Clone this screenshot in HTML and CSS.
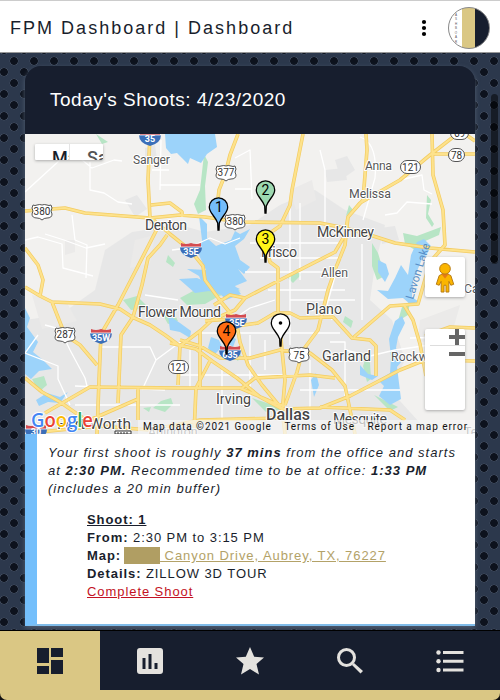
FILE: index.html
```html
<!DOCTYPE html>
<html lang="en">
<head>
<meta charset="utf-8">
<title>FPM Dashboard</title>
<link rel="stylesheet" href="styles.css">
</head>
<body>
<header class="topbar">
  <h1>FPM Dashboard | Dashboard</h1>
  <svg class="more" viewBox="0 0 6 18"><circle cx="3" cy="3" r="2.1"/><circle cx="3" cy="9" r="2.1"/><circle cx="3" cy="15" r="2.1"/></svg>
  <div class="avatar"><span>DASHBOARD</span></div>
</header>
<main class="content">
  <section class="card">
    <h2>Today's Shoots: 4/23/2020</h2>
    <div class="map">
      <svg class="map-art" viewBox="25 134 450 300">
        <defs>
          <path id="us" d="M-9-7Q-7-6-5-7Q-2-8 0-7Q2-8 5-7Q7-6 9-7L10-4Q8-1 10 2Q10 6 5 6Q2 6 0 8Q-2 6-5 6Q-10 6-10 2Q-8-1-10-4Z" fill="#fff" stroke="#555" stroke-width="1"/>
          <g id="inter"><path d="M-10-7Q-5-5 0-7Q5-5 10-7L10-3H-10Z" fill="#d34b50"/><path d="M-11-3H11Q11 5 0 8Q-11 5-11-3Z" fill="#3b6fb9"/><path d="M-11-3H11" stroke="#fff" stroke-width=".8"/></g>
          <path id="pin" d="M-9.200 0A9.200 9.200 0 0 1 9.200 0C9.200 6 4 8 .8 16L.5 23H-.5L-.8 16C-4 8-9.200 6-9.200 0Z" stroke="#000" stroke-width="1.300"/>
          <path id="roads" d="M150 134L148 180L150 218L156 231L135 272L118 305L101 334L99 380L97 434M150 217L170 234L190 250L203 266L205 280L222 303L236 320L240 342L248 365L262 385L282 409L285 434M25 211L65 208L85 213L150 218L180 215L205 217L240 222L320 223L345 228L370 235L395 243L430 248L475 252M238 134L230 155L225 175L219 190L216 217M151 205L170 203L182 212L182 217M167 235L160 245L148 258L142 285L133 317L121 335L118 403M25 248L38 265L43 280L40 296M25 287L40 296L52 302L100 304L120 309L132 317L150 325L165 335L180 346M52 302L65 335L80 345L97 365M303 134L292 190L290 205L280 226L270 233L267 250L270 262L278 268L278 310L282 350L285 380L282 414M457 134L430 155L400 180L360 203L348 217L345 235L335 252L280 280L245 298L235 310L212 320L200 331L180 346L178 385M366 134L367 150L363 200L348 217L345 245L335 270L328 290L318 330L303 350L297 372L285 405M432 134L433 175L443 210L445 245L430 262L418 304L390 306L354 337M432 154H475M465 134L475 141M205 321L230 319L237 326L258 323L275 313L290 313L300 318L333 317L352 338L370 340L376 346L376 376M200 331V388M180 340L200 346L220 358L250 358L280 350L310 353L332 370L345 386L350 410L355 434M170 343L196 349L212 361L237 378L260 397L282 409L320 408L350 396L400 370L425 360L475 361M25 378L42 392L60 402L83 418M45 413L90 387L180 388L240 388L272 402L285 406M83 423L138 399M138 387V420M40 432L100 426L150 430L200 420L282 418M210 361L196 388L194 434M320 407L390 410L405 420M404 305L413 320L420 344L426 376M214 305L230 295L245 298M242 388L255 378L310 375L335 378M425 336L450 327L475 328"/>
        </defs>
        <rect x="25" y="134" width="450" height="300" fill="#f2f1ef"/>
        <path class="urban" d="M25 320L60 315L95 290L105 250L132 232L180 225L205 232L250 225L280 205L315 190L345 210L385 225L375 265L370 300L392 320L405 360L390 390L430 434H25ZM125 200l12-5 10 14-12 8zM335 160l12-4 8 14-14 10zM145 148l10-3 2 15-12 3zM325 170l20-2 2 12-20 2zM380 228l15-2 4 14-17 4z"/>
        <path class="soft" d="M65 240h10v12l-10 3zM32 295l35 8 10 18-35 8zM135 240l20-5-5 28-20 5zM290 190l22-10 4 20-20 10zM420 320l40-15-10 35-32 2z"/>
        <g class="park">
          <path d="M204 154l4 8-3 24 1 24-8 4-4-10 6-14 2-18zM96 134l12 8-6 2zM168 255l7 8-2 4-7-5zM160 310l12-1 6 12-10 3zM180 298l15-8 32-4 14 5-22 5-14 8-18 1zM123 300l14-4 12 12-18 2zM32 379l12-3 3 9-8 7zM153 408l8-7 10-3 2 6-8 8zM372 243l6 10 7 23-8 4-5-14zM403 233l14 3 24-9-2 8-16 7-8 8-10-6zM427 195l4 5-3 14 6 10-2 3-6-9zM345 316l8 5-2 7-8-6zM366 357l4 6 1 16-4 3-4-16zM374 395l24 12-8 4zM288 278l9-9 4 6-8 8zM143 408l8-1-2 5zM235 350l6 5-3 6-6-5zM349 205l4 5-7 6zM402 307l8-6-2 14-10 6zM252 398l24 8 4 4-14 2z"/>
        </g>
        <g class="water">
          <path d="M165 134H215L217 147L207 154L201 163L190 158L188 164L177 153L171 154L166 148Z"/>
          <path d="M199 216L207 224L207 238L216 246L231 240L235 231L240 234L250 229L244 239L235 246L240 260L250 267L244 274L238 269L247 281L235 286L241 294L226 300L216 289L204 287L199 276L187 269L206 270L199 255L202 240Z"/>
          <path d="M179 279L197 278L216 286L229 284L240 289L225 296L209 291L195 293ZM168 315L180 323L191 331L190 338L180 332L170 330ZM211 337l8 3 3 7-8 8-6-7zM228 335l8 4-3 8-7-5z"/>
          <path d="M25 308L30 318L27 327L38 342L33 352L43 360L52 369L39 371L31 379L25 374ZM36 400l11-7 13 4 8-5-8 11-12-1-9 4z"/>
          <path d="M424 239L431 246L427 254L422 259L413 281L412 297L419 302L410 304L403 298L388 299L377 290L388 291L395 278L401 265L408 275L411 255L417 242ZM402 316L405 323L398 337L396 348L402 361L397 367L401 399L390 405L379 396L384 386L378 380L390 373L391 357L389 339L395 321ZM378 260l8 4 3 10-4 8-7-10zM311 380l5-7 3 12-5 12zM360 365l8 9 10 2-6 4-12-5z"/>
        </g>
        <g class="minor">
          <path d="M25 192L60 160L65 146L92 168L114 160L122 161M90 162L90 190L104 193L118 202L132 204M45 234L64 240L86 248L105 244M72 215L75 240L87 245L86 278M25 240L38 237L62 244L63 268L93 276M161 140L160 190M152 170H169M160 185H200M235 158L250 150L252 199M235 189H252M325 223V170L320 150M360 137Q378 143 375 178L363 220M385 215l12-2 10-11 25 2M400 180l22-5 2 15 8 4M344 244L327 305L332 320M362 244L362 320M290 205V345M300 203V280M250 243H340M260 258H342M245 272H340M268 290H345M290 300H355M200 333H340M330 342H345V400M45 325L60 329L70 350L85 378L88 390M38 335L25 353L58 366L58 379L70 405M100 347H150L156 360L142 390M156 360L183 340M145 295L178 300M75 405H180M190 350V388M222 370V420M250 335V405M265 340V370M310 360V420M180 375H285M300 390H400M345 350L370 356L395 350L430 345M410 338L460 337M75 386L165 390M225 325L250 308L275 300M172 250L188 248L210 238L225 244L240 238"/>
        </g>
        <use href="#roads" class="outer"/>
        <use href="#roads" class="inner"/>
        <g class="town">
          <text x="133" y="164" textLength="37">Sanger</text><text x="365" y="170" textLength="27">Anna</text><text x="349" y="198" textLength="42">Melissa</text><text x="321" y="277" textLength="27">Allen</text><text x="391" y="361" textLength="50">Rockwall</text><text x="464" y="293">Caddo</text><text x="148" y="436">Arlington</text><text x="464" y="436">Terrell</text>
        </g>
        <g class="city">
          <text x="145" y="230" textLength="42">Denton</text><text x="317" y="237" textLength="57">McKinney</text><text x="261" y="257" textLength="36">Frisco</text><text x="138" y="317" textLength="83">Flower Mound</text><text x="306" y="314" textLength="36">Plano</text><text x="322" y="361" textLength="49">Garland</text><text x="216" y="404" textLength="35">Irving</text><text x="333" y="424" textLength="54">Mesquite</text>
          <text class="big" x="57" y="429" textLength="74">Fort Worth</text><text class="dallas" x="266" y="420" textLength="44">Dallas</text>
        </g>
        <text class="lake" transform="translate(413 300) rotate(-73)">Lavon Lake</text>
        <g class="shield">
          <use href="#us" x="42" y="212"/><text x="42" y="215">380</text>
          <use href="#us" x="226" y="173"/><text x="226" y="176">377</text>
          <use href="#us" x="235" y="222"/><text x="235" y="225">380</text>
          <use href="#us" x="65" y="335"/><text x="65" y="338">287</text>
          <use href="#us" x="299" y="355"/><text x="299" y="359">75</text>
          <rect x="400.500" y="160.500" width="20" height="13" rx="6.500"/><text x="410.500" y="170.500">121</text>
          <rect x="448.500" y="148.500" width="16" height="13" rx="6.500"/><text x="456.500" y="158.500">78</text>
          <rect x="450.500" y="126.500" width="18" height="13" rx="6.500"/><text x="459.500" y="137">69</text>
          <rect x="168.500" y="360.500" width="20" height="13" rx="6.500"/><text x="178.500" y="370.500">121</text>
        </g>
        <g class="interstate">
          <use href="#inter" x="150" y="138"/><text x="150" y="142">35</text>
          <use href="#inter" x="191" y="250"/><text x="191" y="255">35E</text>
          <use href="#inter" x="236" y="321"/><text x="237" y="326">35E</text>
          <use href="#inter" x="230" y="353"/><text x="230" y="358">635</text>
          <use href="#inter" x="101" y="336"/><text x="101" y="341">35W</text>
          <use href="#inter" x="36" y="432"/><text x="36" y="435">30</text>
        </g>
        <path d="M115 431H131V434H115Z" fill="#fff" stroke="#333"/><path d="M118 434v-2m3 2v-2m3 2v-2m3 2v-2" stroke="#333"/>
        <rect x="138" y="420" width="337" height="14" fill="#f5f5f5" opacity=".72"/>
        <g class="markers">
          <use href="#pin" x="218.500" y="207" fill="#74bdfb"/><text x="219" y="212">1</text>
          <use href="#pin" x="265.500" y="190" fill="#9dd8b0"/><text x="265.500" y="195">2</text>
          <use href="#pin" x="265.500" y="239" fill="#fff31a"/><text x="265.500" y="244">3</text>
          <use href="#pin" x="226.500" y="331" fill="#ff6d12"/><text x="226.500" y="336">4</text>
          <use href="#pin" x="280.500" y="323" fill="#fff"/><circle cx="280.500" cy="323" r="1.800"/>
        </g>
        <g class="google"><text x="31" y="427" textLength="62" lengthAdjust="spacingAndGlyphs"><tspan fill="#4285f4">G</tspan><tspan fill="#ea4335">o</tspan><tspan fill="#fbbc05">o</tspan><tspan fill="#4285f4">g</tspan><tspan fill="#34a853">l</tspan><tspan fill="#ea4335">e</tspan></text></g>
      </svg>
      <div class="types"><span>Map</span><span>Satellite</span></div>
      <div class="person"><svg viewBox="0 0 20 32"><path d="M4 14Q10 10 16 14L19 23L16 24L14 20V31H11V24H9V31H6V20L4 24L1 23Z" fill="#fbb500" stroke="#b77b12"/><path d="M6 12L10 17L14 12Z" fill="#e57b16"/><circle cx="10" cy="7" r="5.500" fill="#fbb500" stroke="#b77b12"/></svg></div>
      <div class="zoom"><svg viewBox="0 0 40 81"><path d="M5 16.500H40" stroke="#ddd"/><path d="M24 8H40M32 0V16M24 25H40" stroke="#666" stroke-width="4"/></svg></div>
      <div class="legal"><span>Map data ©2021 Google</span><span>Terms of Use</span><span>Report a map error</span></div>
    </div>
    <div class="details">
      <p class="summary"><span>Your first shoot is roughly <b>37 mins</b> from the office and starts</span><br><span>at <b>2:30 PM.</b> Recommended time to be at office: <b>1:33 PM</b></span><br><span>(includes a 20 min buffer)</span></p>
      <div class="shoot">
        <div><b class="name">Shoot: 1</b></div>
        <div><b>From:</b> 2:30 PM to 3:15 PM</div>
        <div class="address"><b>Map:</b><i></i><a>&nbsp;Canyon Drive, Aubrey, TX, 76227</a></div>
        <div><b>Details:</b> ZILLOW 3D TOUR</div>
        <div><a class="complete">Complete Shoot</a></div>
      </div>
    </div>
  </section>
  <div class="scrollbar"></div>
</main>
<nav>
  <div class="tab active"><svg viewBox="0 0 28 28"><path d="M1 1H13V16H1ZM15 1H27V10H15ZM1 19H13V27H1ZM15 13H27V27H15Z"/></svg></div>
  <div class="tab"><svg viewBox="0 0 28 28"><path fill-rule="evenodd" d="M4 1H24Q27 1 27 4V24Q27 27 24 27H4Q1 27 1 24V4Q1 1 4 1ZM6.500 11V22H9.500V11ZM12.500 7V22H15.500V7ZM18.500 16V22H21.500V16Z"/></svg></div>
  <div class="tab"><svg viewBox="0 0 28 28"><path d="M14 0L18.200 9.700L28 10.500L20.500 17L23 27.500L14 22L5 27.500L7.500 17L0 10.500L9.800 9.700Z"/></svg></div>
  <div class="tab"><svg viewBox="0 0 28 28"><circle cx="10.500" cy="10.500" r="8" fill="none" stroke="#e4e2de" stroke-width="3"/><path d="M16 18L18 16L27 24L24.500 26.500L16 18"/></svg></div>
  <div class="tab"><svg viewBox="0 0 28 28"><circle cx="2.500" cy="5.500" r="2.200"/><circle cx="2.500" cy="14.300" r="2.200"/><circle cx="2.500" cy="23" r="2.200"/><path d="M7 4H27.500V7H7ZM7 12.800H27.500V15.800H7ZM7 21.500H27.500V24.500H7Z"/></svg></div>
</nav>
</body>
</html>
```
FILE: styles.css
```css
* { box-sizing: border-box; }
body {
  margin: 0; width: 500px; height: 700px; overflow: hidden;
  display: flex; flex-direction: column;
  font-family: "Liberation Sans", Arial, sans-serif; color: #191e2c; background: #111;
}
.topbar {
  height: 53px; flex: none; display: flex; align-items: center;
  padding: 3px 10px 0; background: #fff; border-top: 1px solid #ccc; border-bottom: 1px solid #999;
}
h1 { margin: 0; flex: 1; font-size: 18px; font-weight: 400; letter-spacing: 2.02px; white-space: nowrap; }
.more { width: 6px; height: 18px; margin-right: 21px; }
.avatar {
  width: 42px; height: 42px; border-radius: 50%; border: 1px solid #888; overflow: hidden;
  background: linear-gradient(90deg, #fff 13px, #dac784 13px 26px, #171e2e 26px);
}
.avatar span { display: block; width: 5px; height: 40px; margin-left: 4px; writing-mode: vertical-rl; text-orientation: upright; font-size: 3px; line-height: 5px; letter-spacing: .5px; text-align: center; color: #555; }
.content {
  height: 577px; flex: none; padding: 13px 25px 0; position: relative; overflow: hidden;
  background-color: #2c384c;
  background-image:
    radial-gradient(circle at 14px 8px, #0d121d 3.5px, #455062 4.2px, transparent 4.7px),
    radial-gradient(circle at 4px 19px, #0d121d 3.5px, #455062 4.2px, transparent 4.7px),
    radial-gradient(circle at 4px -3px, #0d121d 3.5px, #455062 4.2px, transparent 4.7px);
  background-size: 20px 22px;
}
.card { width: 450px; border-radius: 16px 16px 0 0; box-shadow: 0 2px 5px #525f72; }
h2 {
  margin: 0; height: 68px; padding-left: 25px; background: #171e2e; border-radius: 16px 16px 0 0;
  color: #fff; font-size: 19px; font-weight: 400; line-height: 67px; letter-spacing: .5px;
}
.map { height: 300px; position: relative; overflow: hidden; }
.map-art { display: block; width: 450px; height: 300px; font-family: Roboto, sans-serif; }
.urban { fill: #e7e7e7; } .soft { fill: #ebeae9; }
.park { fill: #b7e5c5; } .water { fill: #9cd3fa; }
.minor { fill: none; stroke: #fff; stroke-width: 1.3; stroke-linejoin: round; }
.outer, .inner { fill: none; stroke: #f3cc62; stroke-width: 3.6; stroke-linejoin: round; }
.inner { stroke: #fde28c; stroke-width: 2.2; }
.town, .city { fill: #565656; stroke: #fff; stroke-width: 2px; paint-order: stroke; stroke-linejoin: round; font-size: 12.3px; }
.city { fill: #454545; font-size: 14.2px; }
.big { font-size: 15.5px; } .dallas { font-size: 16px; font-weight: 500; }
.lake { fill: #588fc8; font-size: 11.5px; }
.shield, .interstate { text-anchor: middle; font-size: 10px; font-weight: 400; fill: #333; }
.shield rect { fill: #fff; stroke: #555; }
.interstate { font-size: 9px; font-weight: 700; fill: #fff; }
.markers { font-size: 14px; text-anchor: middle; }
.google { font: 600 20px "Open Sans", sans-serif; stroke: #fff; stroke-width: 2px; paint-order: stroke; }
.types { position: absolute; left: 10px; top: 10px; width: 68px; height: 16px; display: flex; overflow: hidden; background: #fff; box-shadow: 0 1px 3px #aaa; border-radius: 1px; font: 500 18px/27px Roboto, sans-serif; }
.types span { width: 34px; flex: none; padding-left: 17px; overflow: hidden; }
.types span + span { color: #555; border-left: 1px solid #e4e4e4; }
.person, .zoom { position: absolute; left: 400px; width: 40px; background: #fff; border-radius: 2px; box-shadow: 0 1px 3px #aaa; }
.person { top: 123px; height: 40px; display: grid; place-items: center; }
.person svg { width: 20px; height: 31px; }
.zoom { top: 195px; height: 81px; }
.zoom svg { display: block; width: 40px; height: 81px; }
.legal { position: absolute; left: 118px; top: 286px; display: flex; gap: 12.5px; white-space: nowrap; color: #111; font: 10px/13px Roboto, sans-serif; letter-spacing: .95px; }
.details { height: 192px; padding: 10px 0 0 11px; background: #fff; border-left: 12px solid #74bffb; border-bottom: 2px solid #80bce9; font-size: 13px; line-height: 18px; letter-spacing: .93px; }
.summary { margin: 0; font-style: italic; white-space: nowrap; letter-spacing: 1.02px; }
.shoot { margin: 13px 0 0 39px; white-space: nowrap; }
.name { text-decoration: underline; }
.address { display: flex; color: #b3a268; }
.address b { color: #191e2c; }
.address i { width: 36px; height: 17px; margin-left: 3px; background: #b09e63; }
.address a { text-decoration: underline; }
.complete { color: #c31224; text-decoration: underline; }
.scrollbar { position: absolute; left: 491px; top: 41px; width: 7px; height: 170px; border-radius: 4px; background: rgba(0,0,0,.5); }
nav { height: 70px; flex: none; display: flex; background: #171e2e; border-top: 1px solid #000; border-bottom: 10px solid #dac784; border-radius: 0 0 7px 7px; }
.tab { flex: 1; display: grid; place-items: center; padding-top: 1px; }
.tab svg { width: 28px; height: 28px; fill: #e4e2de; }
.active { background: #dac784; }
.active svg { fill: #171e2e; }
```
